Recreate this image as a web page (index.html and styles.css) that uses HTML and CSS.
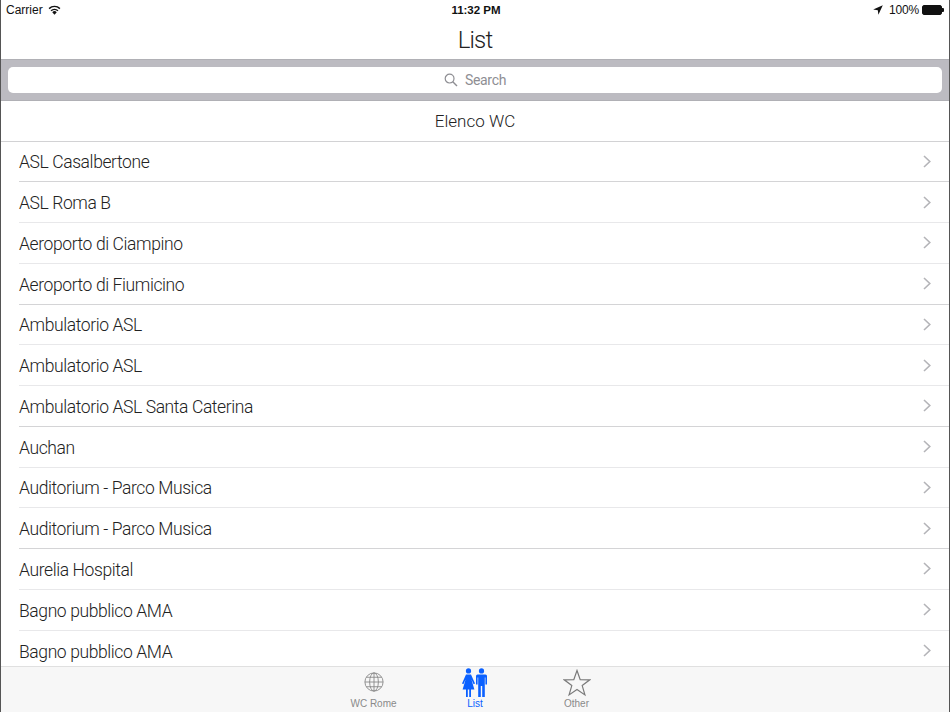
FILE: index.html
```html
<!DOCTYPE html>
<html lang="it">
<head>
  <meta charset="UTF-8" />
  <meta name="viewport" content="width=device-width, initial-scale=1" />
  <title>List</title>
  <link rel="stylesheet" href="styles.css">
</head>
<body>

  <div class="app">

    <div class="status">
      <div class="status-left">
        <span>Carrier</span>
        <svg class="wifi" width="13" height="10" viewBox="0 0 14 10">
          <path d="M7 10 L4.6 7.4 A3.4 3.4 0 0 1 9.4 7.4 Z" fill="#111"/>
          <path d="M3.3 5.8 A5.4 5.4 0 0 1 10.7 5.8" fill="none" stroke="#111" stroke-width="1.6"/>
          <path d="M1.2 3.5 A8.2 8.2 0 0 1 12.8 3.5" fill="none" stroke="#111" stroke-width="1.6"/>
        </svg>
      </div>
      <div class="status-time">11:32 PM</div>
      <div class="status-right">
        <svg class="arrow" width="10" height="10" viewBox="0 0 10 10">
          <path d="M9.8 .2 L.2 4.6 L4.8 5.2 L5.4 9.8 Z" fill="#111"/>
        </svg>
        <span>100%</span>
        <div class="battery"><div class="battery-fill"></div></div>
      </div>
    </div>

    <div class="navbar">List</div>

    <div class="searchbar">
      <div class="searchfield">
        <svg width="14" height="14" viewBox="0 0 14 14">
          <circle cx="5.6" cy="5.6" r="4.4" fill="none" stroke="#8e8e93" stroke-width="1.2"/>
          <path d="M8.8 8.8 L13 13" stroke="#8e8e93" stroke-width="1.4"/>
        </svg>
        <span>Search</span>
      </div>
    </div>

    <div class="list">
      <div class="list-title">Elenco WC</div>
      <div class="row first"><span>ASL Casalbertone</span><svg class="chev" width="8" height="13" viewBox="0 0 8 13"><path d="M1 1 L6.8 6.5 L1 12" /></svg></div>
      <div class="row"><span>ASL Roma B</span><svg class="chev" width="8" height="13" viewBox="0 0 8 13"><path d="M1 1 L6.8 6.5 L1 12" /></svg></div>
      <div class="row"><span>Aeroporto di Ciampino</span><svg class="chev" width="8" height="13" viewBox="0 0 8 13"><path d="M1 1 L6.8 6.5 L1 12" /></svg></div>
      <div class="row first"><span>Aeroporto di Fiumicino</span><svg class="chev" width="8" height="13" viewBox="0 0 8 13"><path d="M1 1 L6.8 6.5 L1 12" /></svg></div>
      <div class="row"><span>Ambulatorio ASL</span><svg class="chev" width="8" height="13" viewBox="0 0 8 13"><path d="M1 1 L6.8 6.5 L1 12" /></svg></div>
      <div class="row"><span>Ambulatorio ASL</span><svg class="chev" width="8" height="13" viewBox="0 0 8 13"><path d="M1 1 L6.8 6.5 L1 12" /></svg></div>
      <div class="row first"><span>Ambulatorio ASL Santa Caterina</span><svg class="chev" width="8" height="13" viewBox="0 0 8 13"><path d="M1 1 L6.8 6.5 L1 12" /></svg></div>
      <div class="row"><span>Auchan</span><svg class="chev" width="8" height="13" viewBox="0 0 8 13"><path d="M1 1 L6.8 6.5 L1 12" /></svg></div>
      <div class="row"><span>Auditorium - Parco Musica</span><svg class="chev" width="8" height="13" viewBox="0 0 8 13"><path d="M1 1 L6.8 6.5 L1 12" /></svg></div>
      <div class="row first"><span>Auditorium - Parco Musica</span><svg class="chev" width="8" height="13" viewBox="0 0 8 13"><path d="M1 1 L6.8 6.5 L1 12" /></svg></div>
      <div class="row"><span>Aurelia Hospital</span><svg class="chev" width="8" height="13" viewBox="0 0 8 13"><path d="M1 1 L6.8 6.5 L1 12" /></svg></div>
      <div class="row"><span>Bagno pubblico AMA</span><svg class="chev" width="8" height="13" viewBox="0 0 8 13"><path d="M1 1 L6.8 6.5 L1 12" /></svg></div>
      <div class="row last"><span>Bagno pubblico AMA</span><svg class="chev" width="8" height="13" viewBox="0 0 8 13"><path d="M1 1 L6.8 6.5 L1 12" /></svg></div>
    </div>

    <div class="tabbar">
      <div class="tab">
        <div class="tab-icon">
          <svg class="globe" width="20" height="20" viewBox="0 0 22 22" fill="none" stroke="#8a8a8a" stroke-width="1">
            <circle cx="11" cy="11" r="10"/>
            <ellipse cx="11" cy="11" rx="4.8" ry="10"/>
            <path d="M11 1 V21 M1 11 H21 M2.6 5.8 H19.4 M2.6 16.2 H19.4"/>
          </svg>
        </div>
        <span>WC Rome</span>
      </div>
      <div class="tab active">
        <div class="tab-icon">
          <svg width="26" height="30" viewBox="0 0 26 30" fill="#0a60ff">
            <circle cx="6.5" cy="2.9" r="2.6"/>
            <path d="M4 6.4 H9 L13 15.5 L11.6 16.2 L9.4 11.6 L12.4 21.5 H9 V29 H7.2 V21.5 H5.8 V29 H4 V21.5 H.6 L3.6 11.6 L1.4 16.2 L0 15.5 Z"/>
            <circle cx="19.5" cy="2.9" r="2.6"/>
            <path d="M15.5 6.4 H23.5 Q25 6.4 25 8 V16.5 H23.4 V9.5 H22.8 V29 H20.2 V18 H18.8 V29 H16.2 V9.5 H15.6 V16.5 H14 V8 Q14 6.4 15.5 6.4 Z"/>
          </svg>
        </div>
        <span>List</span>
      </div>
      <div class="tab">
        <div class="tab-icon">
          <svg width="28" height="28" viewBox="0 0 28 28" fill="none" stroke="#7a7a7a" stroke-width="1.2">
            <path d="M14 1.5 L17.2 10.6 L26.8 10.8 L19.2 16.6 L21.9 25.9 L14 20.4 L6.1 25.9 L8.8 16.6 L1.2 10.8 L10.8 10.6 Z"/>
          </svg>
        </div>
        <span>Other</span>
      </div>
    </div>

  </div>

</body>
</html>
```

FILE: styles.css
```css
html, body {
  margin: 0;
  height: 100%;
}

body {
  font-family: 'Roboto', 'Liberation Sans', sans-serif;
  background-color: #fff;
  color: #222;
  overflow: hidden;
}

.app {
  display: flex;
  flex-direction: column;
  height: 712px;
  border-left: 1px solid #555;
  border-right: 1px solid #555;
  box-sizing: border-box;
  overflow: hidden;
}

.status {
  display: flex;
  align-items: center;
  justify-content: space-between;
  height: 20px;
  padding: 0 7px 0 5px;
  font-family: 'Liberation Sans', sans-serif;
  font-size: 12px;
  color: #111;
  flex-shrink: 0;
}

.status-left,
.status-right {
  display: flex;
  align-items: center;
  width: 200px;
}

.status-left {
  gap: 5px;
}

.status-right {
  justify-content: flex-end;
  gap: 3px;
}

.status-right span {
  letter-spacing: -0.2px;
}

.arrow {
  margin-right: 3px;
}

.status-time {
  font-weight: bold;
  font-size: 11.5px;
  margin-left: 4px;
}

.battery {
  position: relative;
  box-sizing: border-box;
  width: 20px;
  height: 10px;
  border: 1px solid #111;
  border-radius: 2px;
}

.battery::after {
  content: "";
  position: absolute;
  right: -3px;
  top: 2px;
  width: 2px;
  height: 4px;
  background-color: #111;
  border-radius: 0 1px 1px 0;
}

.battery-fill {
  height: 100%;
  background-color: #111;
}

.navbar {
  height: 39px;
  line-height: 40px;
  text-align: center;
  font-size: 24px;
  font-weight: 300;
  letter-spacing: -0.8px;
  flex-shrink: 0;
}

.searchbar {
  display: flex;
  box-sizing: border-box;
  height: 42px;
  padding: 7px 7px;
  background-color: #bcbbc1;
  border-top: 1px solid #b0b0b5;
  border-bottom: 1px solid #b0b0b5;
  flex-shrink: 0;
}

.searchfield {
  flex: 1;
  display: flex;
  align-items: center;
  justify-content: center;
  gap: 7px;
  background-color: #fff;
  border-radius: 5px;
  color: #8e8e93;
  font-size: 14px;
  letter-spacing: -0.3px;
}

.list {
  flex: 1;
  overflow: hidden;
  min-height: 0;
}

.list-title {
  height: 39.5px;
  line-height: 40px;
  text-align: center;
  font-size: 17px;
  font-weight: 300;
  border-bottom: 1px solid #d2d2d4;
}

.row {
  display: flex;
  align-items: center;
  justify-content: space-between;
  box-sizing: border-box;
  height: 40.75px;
  margin-left: 18px;
  padding-right: 18px;
  font-size: 17.5px;
  font-weight: 300;
  letter-spacing: -0.4px;
  border-bottom: 1px solid #e8e8ea;
}

.row span {
  padding-top: 2px;
}

.row.first {
  border-bottom-color: #d4d4d6;
}

.row.last {
  border-bottom: none;
}

.chev {
  fill: none;
  stroke: #b4b4b8;
  stroke-width: 1.6;
}

.tabbar {
  display: flex;
  justify-content: center;
  gap: 55.5px;
  height: 46px;
  padding-top: 1px;
  background-color: #f7f7f7;
  border-top: 1px solid #e0e0e0;
  box-sizing: border-box;
  flex-shrink: 0;
}

.tab {
  display: flex;
  flex-direction: column;
  align-items: center;
  width: 46px;
  font-size: 10px;
  line-height: 11px;
  font-family: 'Liberation Sans', sans-serif;
  color: #8a8a8a;
  white-space: nowrap;
}

.tab-icon {
  display: flex;
  align-items: center;
  justify-content: center;
  height: 30px;
}

.globe {
  margin-bottom: 3px;
}

.tab.active {
  color: #0a60ff;
}
```
